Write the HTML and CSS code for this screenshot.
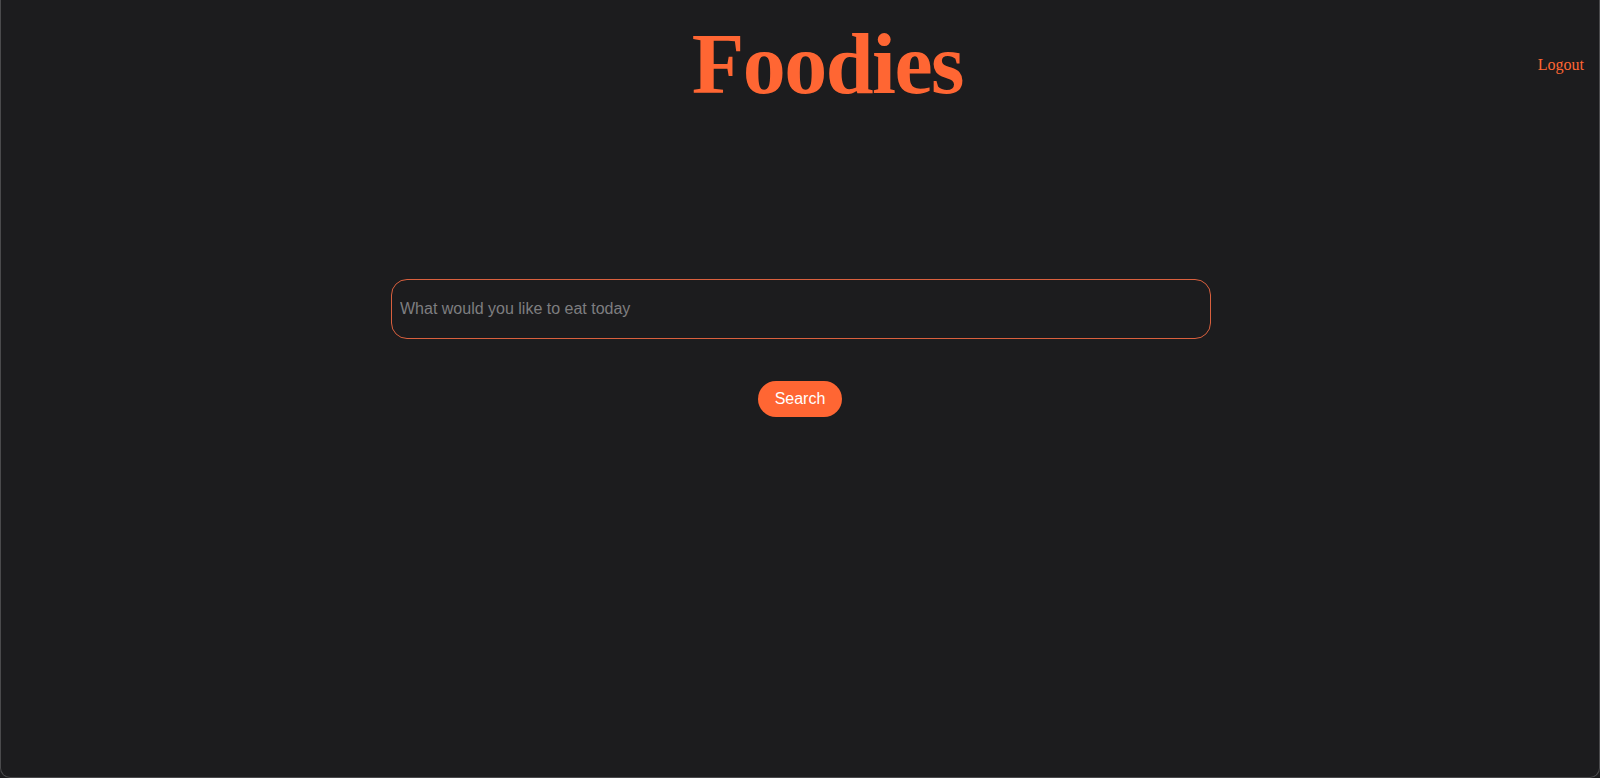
FILE: index.html
```html
<!DOCTYPE html>
<html lang="en">
<head>
<meta charset="utf-8">
<title>Foodies</title>
<link rel="stylesheet" href="styles.css">
</head>
<body>
<div class="window">
  <header class="header">
    <h1 class="brand">Foodies</h1>
    <a class="logout" href="#">Logout</a>
  </header>
  <main class="search">
    <input class="search-input" type="text" placeholder="What would you like to eat today">
    <button class="search-btn" type="button">Search</button>
  </main>
</div>
</body>
</html>
```
FILE: styles.css
```css
html, body {
  margin: 0;
  padding: 0;
  height: 100%;
  background: #1c1c1e;
}
body {
  font-family: "Liberation Serif", "Times New Roman", serif;
}
.window {
  box-sizing: border-box;
  height: 778px;
  border: 1px solid #4a4a4c;
  border-top: none;
  border-radius: 0 0 10px 10px;
  background: #1c1c1e;
  display: flex;
  flex-direction: column;
}
.header {
  display: flex;
  align-items: flex-start;
  padding-left: 116px;
  padding-right: 15px;
}
.brand {
  flex: 1;
  margin: 21px 0 0 0;
  text-align: center;
  font-family: "Liberation Serif", "Times New Roman", serif;
  font-weight: bold;
  font-size: 86px;
  line-height: 1;
  letter-spacing: -1.5px;
  color: #ff6633;
}
.logout {
  margin-top: 56px;
  font-size: 16px;
  color: #ff6633;
  text-decoration: none;
}
.search {
  display: flex;
  flex-direction: column;
  align-items: center;
  padding-top: 172px;
}
.search-input {
  box-sizing: border-box;
  width: 820px;
  height: 60px;
  margin-left: 2px;
  padding: 0 8px;
  border: 1px solid #d9603e;
  border-radius: 16px;
  background: #1c1c1e;
  color: #ddd;
  font-family: "Liberation Sans", Arial, sans-serif;
  font-size: 16px;
  outline: none;
}
.search-input::placeholder {
  color: #7e7e80;
}
.search-btn {
  margin-top: 42px;
  width: 84px;
  height: 36px;
  border: none;
  border-radius: 18px;
  background: #ff6633;
  color: #fff;
  font-family: "Liberation Sans", Arial, sans-serif;
  font-size: 16px;
  padding: 0;
}
```
